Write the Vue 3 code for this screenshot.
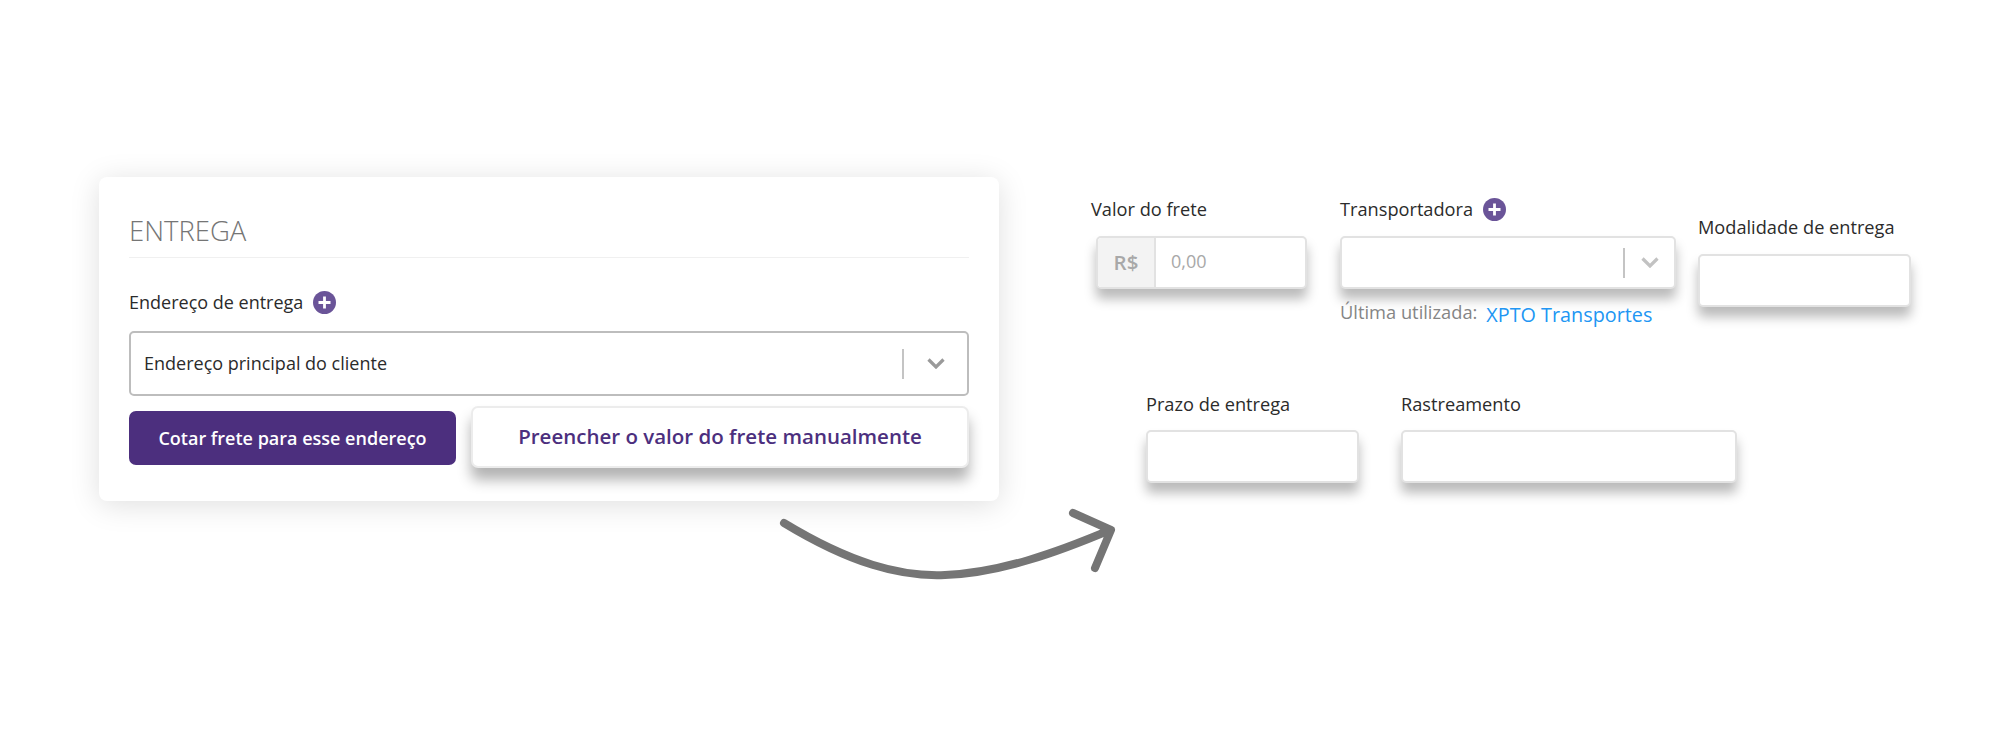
<script setup>
const plusPath = 'M11.5 5.5v12M5.5 11.5h12'
</script>

<template>
  <div class="page">
    <section class="card">
      <h2 class="card-title">ENTREGA</h2>
      <div class="label label-address">
        <span>Endereço de entrega</span>
        <svg class="plus" viewBox="0 0 23 23" width="23" height="23">
          <circle cx="11.5" cy="11.5" r="11.5" fill="#6a5498" />
          <path :d="plusPath" stroke="#fff" stroke-width="2.8" fill="none" />
        </svg>
      </div>
      <div class="address-select">
        <span class="address-text">Endereço principal do cliente</span>
        <div class="select-end">
          <i class="sep"></i>
          <svg viewBox="0 0 18 11" width="18" height="11">
            <path d="M1.5 1.5l7.5 7.5 7.5-7.5" stroke="#9a9a9a" stroke-width="3.2" fill="none" />
          </svg>
        </div>
      </div>
      <div class="actions">
        <button class="btn-primary">Cotar frete para esse endereço</button>
        <button class="btn-manual">Preencher o valor do frete manualmente</button>
      </div>
    </section>

    <div class="fields">
      <div class="row">
        <div class="field field-value">
          <div class="label">Valor do frete</div>
          <div class="box money">
            <span class="prefix">R$</span>
            <span class="placeholder">0,00</span>
          </div>
        </div>
        <div class="field field-carrier">
          <div class="label">
            <span>Transportadora</span>
            <svg class="plus" viewBox="0 0 23 23" width="23" height="23">
              <circle cx="11.5" cy="11.5" r="11.5" fill="#6a5498" />
              <path :d="plusPath" stroke="#fff" stroke-width="2.8" fill="none" />
            </svg>
          </div>
          <div class="box carrier-select">
            <i class="sep"></i>
            <svg viewBox="0 0 18 11" width="18" height="11">
              <path d="M1.5 1.5l7.5 7.5 7.5-7.5" stroke="#c2c2c2" stroke-width="3.2" fill="none" />
            </svg>
          </div>
          <div class="hint">
            <span class="hint-text">Última utilizada:</span>
            <a class="hint-link">XPTO Transportes</a>
          </div>
        </div>
        <div class="field field-mode">
          <div class="label">Modalidade de entrega</div>
          <div class="box"></div>
        </div>
      </div>
      <div class="row row-second">
        <div class="field">
          <div class="label">Prazo de entrega</div>
          <div class="box box-small"></div>
        </div>
        <div class="field">
          <div class="label">Rastreamento</div>
          <div class="box box-wide"></div>
        </div>
      </div>
    </div>

    <svg class="arrow" viewBox="0 0 2010 750" width="2010" height="750">
      <path
        d="M784 523C850 563 900 577 945 575C1000 573 1058 552 1110 530M1073 513L1111 530L1095 568"
        stroke="#757575"
        stroke-width="8"
        stroke-linecap="round"
        stroke-linejoin="round"
        fill="none"
      />
    </svg>
  </div>
</template>

<style>
html,
body {
  margin: 0;
  background: #fff;
}
</style>

<style scoped>
.page {
  position: relative;
  display: flex;
  align-items: flex-start;
  box-sizing: border-box;
  width: 2010px;
  height: 750px;
  padding: 177px 0 0 99px;
  overflow: hidden;
  background: #fff;
  color: #2b2b2b;
  font-family: "Open Sans", "Liberation Sans", sans-serif;
  font-size: 18px;
}

.card {
  box-sizing: border-box;
  width: 900px;
  padding: 36px 30px 33px;
  border-radius: 8px;
  background: #fff;
  box-shadow: 0 4px 30px rgba(0, 0, 0, 0.13);
}

.card-title {
  margin: 0 0 32px;
  padding-bottom: 8px;
  border-bottom: 1px solid #f0f0f0;
  color: #757575;
  font-size: 27.5px;
  font-weight: 300;
  line-height: 36px;
}

.label {
  display: flex;
  align-items: center;
  gap: 10px;
  height: 24px;
  line-height: 24px;
  white-space: nowrap;
}

.label-address {
  margin-bottom: 17px;
}

.plus {
  flex: none;
}

.address-select {
  display: flex;
  align-items: center;
  justify-content: space-between;
  box-sizing: border-box;
  height: 65px;
  padding: 0 22px 0 13px;
  border: 2px solid #bdbdbd;
  border-radius: 5px;
}

.address-text {
  padding-bottom: 2px;
}

.select-end {
  display: flex;
  align-items: center;
  gap: 23px;
}

.sep {
  display: block;
  width: 2px;
  height: 30px;
  background: #c4c4c4;
}

.actions {
  display: flex;
  align-items: center;
  gap: 15px;
  margin-top: 10px;
}

button {
  font-family: inherit;
  border-radius: 7px;
  cursor: pointer;
}

.btn-primary {
  width: 327px;
  height: 54px;
  margin-top: 2px;
  padding: 0;
  border: none;
  background: #4c2f7e;
  color: #fff;
  font-size: 18px;
  font-weight: 600;
}

.btn-manual {
  width: 498px;
  height: 62px;
  padding: 0 0 3px;
  border: 2px solid #ececec;
  background: #fff;
  color: #4c2f7e;
  font-size: 20.5px;
  font-weight: 600;
  box-shadow: 0 12px 14px rgba(0, 0, 0, 0.3);
}

.fields {
  margin: 20px 0 0 92px;
}

.row {
  display: flex;
  align-items: flex-start;
  gap: 34px;
}

.row-second {
  gap: 42px;
  margin-top: 65px;
  padding-left: 55px;
}

.field .label {
  margin-bottom: 15px;
  font-size: 18.2px;
}

.row-second .field .label {
  margin-bottom: 14px;
}

.field-value {
  width: 216px;
}

.field-carrier {
  width: 336px;
  margin-left: -1px;
  margin-right: -12px;
}

.field-mode {
  margin-top: 18px;
}

.box {
  box-sizing: border-box;
  width: 213px;
  height: 53px;
  border: 2px solid #e2e2e2;
  border-radius: 5px;
  background: #fff;
  box-shadow: 0 10px 12px rgba(0, 0, 0, 0.27);
}

.box-small {
  width: 213px;
}

.box-wide {
  width: 336px;
}

.money {
  display: flex;
  width: 211px;
  margin-left: 5px;
}

.prefix {
  display: flex;
  align-items: center;
  justify-content: center;
  box-sizing: border-box;
  width: 58px;
  border-right: 2px solid #e2e2e2;
  background: #f3f3f3;
  border-radius: 4px 0 0 4px;
  color: #a8a8a8;
  font-size: 20.5px;
  font-weight: 600;
  line-height: 53px;
}

.placeholder {
  margin-left: 15px;
  color: #a8a8a8;
  line-height: 46px;
}

.carrier-select {
  display: flex;
  align-items: center;
  justify-content: flex-end;
  gap: 16px;
  width: 336px;
  padding-right: 15px;
}

.hint {
  display: flex;
  align-items: flex-start;
  gap: 9px;
  margin-top: 11px;
  white-space: nowrap;
}

.hint-text {
  color: #858585;
  font-size: 18.3px;
  line-height: 24px;
}

.hint-link {
  margin-top: 3px;
  color: #2196f3;
  font-size: 19.8px;
  line-height: 24px;
}

.arrow {
  position: absolute;
  top: 0;
  left: 0;
  pointer-events: none;
}
</style>
